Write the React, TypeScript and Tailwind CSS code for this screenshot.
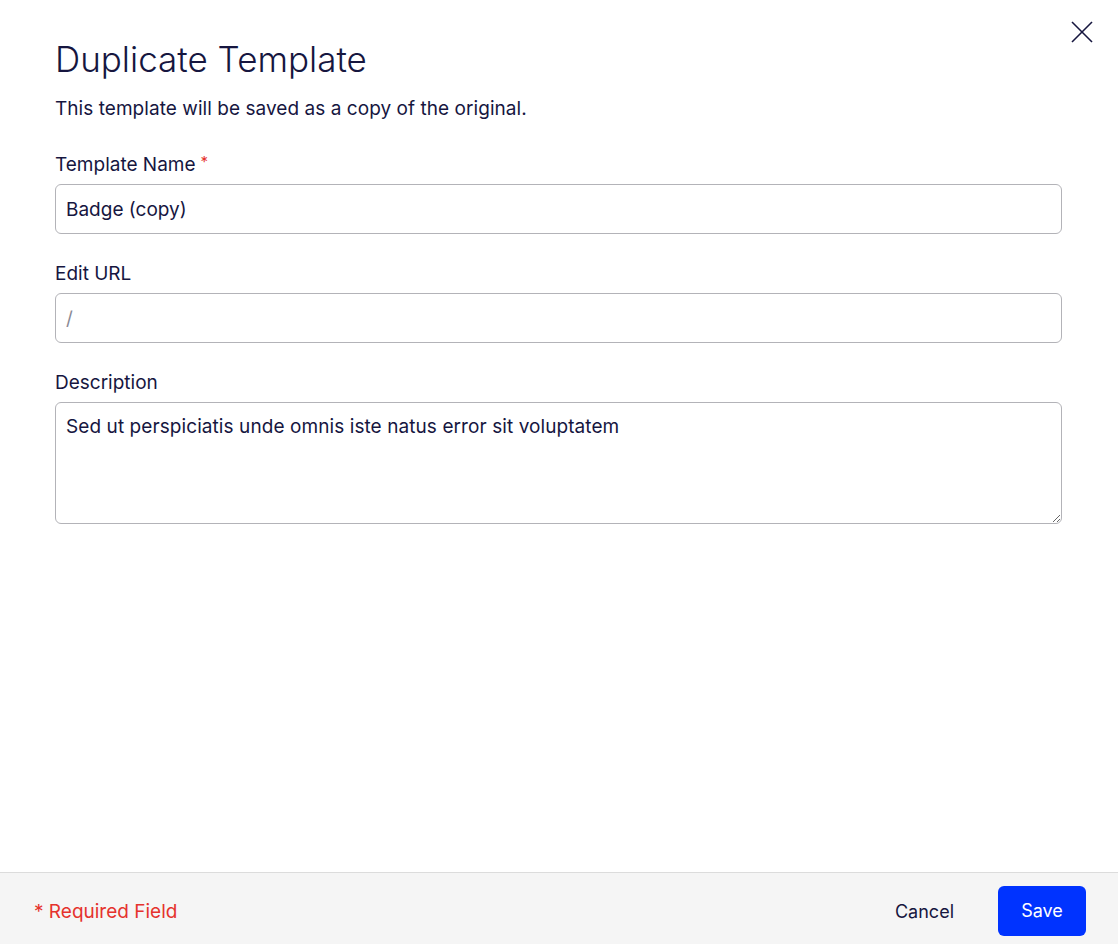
const font = { fontFamily: "Inter, 'Noto Sans', sans-serif" };

const Field = ({
  label,
  required,
  children,
}: {
  label: string;
  required?: boolean;
  children: React.ReactNode;
}) => (
  <div className="flex flex-col">
    <label className="text-[19px] leading-[24px] text-[#16163f] mb-[7px] flex">
      {label}
      {required && <span className="text-[#e5322d] text-[15px] leading-[15px] ml-[5px] mt-[1px]">*</span>}
    </label>
    {children}
  </div>
);

const App = () => {
  return (
    <div className="h-screen w-full bg-white flex flex-col relative" style={font}>
      <button className="absolute top-[21px] right-[25px] text-[#16163f]">
        <svg width="22" height="22" viewBox="0 0 22 22" fill="none" stroke="currentColor" strokeWidth="1.6">
          <line x1="1" y1="1" x2="21" y2="21" />
          <line x1="21" y1="1" x2="1" y2="21" />
        </svg>
      </button>

      <div className="flex-1 px-[55px] pt-[36px]">
        <h1 className="text-[35px] leading-[46px] font-light text-[#16163f]">Duplicate Template</h1>
        <p className="text-[19px] leading-[26px] tracking-[0.05px] text-[#16163f] mt-[14px]">
          This template will be saved as a copy of the original.
        </p>

        <div className="flex flex-col gap-[28px] mt-[31px] w-[1007px]">
          <Field label="Template Name" required>
            <input
              defaultValue="Badge (copy)"
              className="h-[50px] w-full rounded-[6px] border border-[#b3b3b8] px-[10px] text-[19px] text-[#16163f] outline-none"
            />
          </Field>
          <Field label="Edit URL">
            <input
              placeholder="/"
              className="h-[50px] w-full rounded-[6px] border border-[#b3b3b8] px-[10px] text-[19px] text-[#16163f] placeholder:text-[#8a8a95] outline-none"
            />
          </Field>
          <Field label="Description">
            <textarea
              defaultValue="Sed ut perspiciatis unde omnis iste natus error sit voluptatem"
              className="h-[122px] w-full rounded-[6px] border border-[#b3b3b8] px-[10px] py-[11px] text-[19px] leading-[26px] tracking-[0.08px] text-[#16163f] outline-none resize-y"
            />
          </Field>
        </div>
      </div>

      <div className="h-[72px] shrink-0 bg-[#f5f5f5] border-t border-[#dcdcdc] flex items-center pt-[4px] pl-[34px] pr-[32px]">
        <span className="text-[19px] leading-[24px] text-[#e5322d] mt-[3px]">* Required Field</span>
        <div className="ml-auto flex items-center gap-[44px]">
          <button className="text-[18px] leading-[24px] text-[#16163f] mt-[2px]">Cancel</button>
          <button className="h-[50px] w-[88px] rounded-[6px] bg-[#0033ff] text-white text-[18px]">Save</button>
        </div>
      </div>
    </div>
  );
};

export default App;
